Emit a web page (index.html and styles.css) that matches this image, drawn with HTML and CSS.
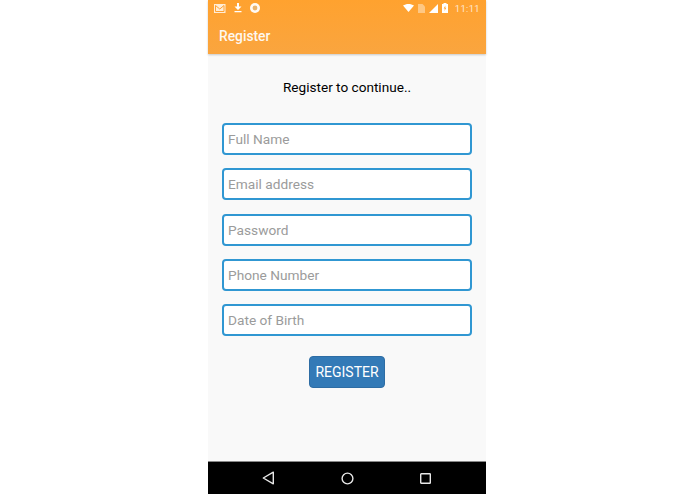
FILE: index.html
```html
<!DOCTYPE html>
<html lang="en">
<head>
<meta charset="utf-8">
<title>Register</title>
<link rel="stylesheet" href="styles.css">
</head>
<body>
<div class="phone">
  <header class="appbar">
    <div class="status">
      <div class="status-left">
        <svg class="ic" width="12" height="11" viewBox="0 0 12 11"><path fill="#fff" fill-opacity=".8" d="M0 1h11.500v9H0z"/><path fill="none" stroke="#ffa233" stroke-width="1" d="M1.500 2.500v6h8.500v-6l-4.200 3.500z"/></svg>
        <svg class="ic" width="8" height="10" viewBox="0 0 8 10"><path fill="#fff" d="M3 0h2v3.500h2.500L4 7 .5 3.500H3zM.5 8h7v1.200h-7z"/></svg>
        <svg class="ic" width="10" height="10" viewBox="0 0 10 10"><circle cx="5" cy="5" r="5" fill="#fff" fill-opacity=".95"/><circle cx="5" cy="5" r="2.400" fill="#e9b36c"/></svg>
      </div>
      <div class="status-right">
        <svg width="11" height="8" viewBox="0 0 11 8"><path fill="#fff" d="M0 1.600C3-.5 8-.5 11 1.600L5.500 8z"/></svg>
        <svg width="7" height="9" viewBox="0 0 7 9"><path fill="#fff" fill-opacity=".4" d="M0 0h4.500L7 2.500V9H0z"/></svg>
        <svg width="9" height="9" viewBox="0 0 9 9"><path fill="#fff" d="M9 0v9H0z"/></svg>
        <svg width="6" height="10" viewBox="0 0 6 10"><path fill="#fff" d="M1.500 0h3v1H6v9H0V1h1.500z"/><path fill="#ffa233" d="M3.400 2.500 1.700 5.600h1.100L2.500 8l1.800-3.200H3.200z"/></svg>
        <span class="time">11:11</span>
      </div>
    </div>
    <div class="bar-title">Register</div>
  </header>
  <main class="content">
    <h1 class="heading">Register to continue..</h1>
    <form class="form">
      <input class="field" type="text" placeholder="Full Name">
      <input class="field" type="text" placeholder="Email address">
      <input class="field" type="text" placeholder="Password">
      <input class="field" type="text" placeholder="Phone Number">
      <input class="field" type="text" placeholder="Date of Birth">
      <button class="submit" type="button">REGISTER</button>
    </form>
  </main>
  <nav class="navbar">
    <svg width="13" height="14" viewBox="0 0 13 14"><path fill="none" stroke="#e8e8e8" stroke-width="1.400" stroke-linejoin="round" d="M11.300 1.200v11.600L1.300 7z"/></svg>
    <svg width="13" height="13" viewBox="0 0 13 13"><circle cx="6.500" cy="6.500" r="5.400" fill="none" stroke="#e8e8e8" stroke-width="1.400"/></svg>
    <svg width="11" height="11" viewBox="0 0 11 11"><rect x=".7" y=".7" width="9.600" height="9.600" rx=".6" fill="none" stroke="#e8e8e8" stroke-width="1.400"/></svg>
  </nav>
</div>
</body>
</html>
```
FILE: styles.css
```css
* { box-sizing: border-box; }
html, body { margin: 0; height: 100%; background: #fff; }
body { padding-left: 208px; font-family: Roboto, "Liberation Sans", sans-serif; }
.phone { width: 278px; height: 494px; display: flex; flex-direction: column; background: #f9f9f9; }
.appbar { height: 54px; flex: none; background: linear-gradient(#ffa22f, #faa53f); box-shadow: 0 1px 2px rgba(0,0,0,.2); position: relative; }
.status { height: 16px; display: flex; justify-content: space-between; align-items: center; padding: 0 6px; }
.status-left, .status-right { display: flex; align-items: center; }
.status-left { gap: 8px; }
.status-right { gap: 4px; }
.ic { display: block; }
.time { font-size: 9.500px; color: #fff; opacity: .75; letter-spacing: .3px; margin-left: 3px; }
.bar-title { color: #fff; font-size: 13.800px; font-weight: 500; opacity: .92; padding: 12px 0 0 11px; }
.content { flex: 1; display: flex; flex-direction: column; align-items: center; }
.heading { margin: 24px 0 0; font-size: 13.600px; line-height: 18px; font-weight: 400; color: #000; }
.form { width: 100%; padding: 27px 0 0; display: flex; flex-direction: column; align-items: center; gap: 13.300px; }
.field { width: 250px; height: 32px; display: block; padding: 0 4px; border: 2px solid #3097d2; border-radius: 4px; background: #fff; font-family: inherit; font-size: 13.700px; outline: none; }
.field::placeholder { color: #9b9b9b; opacity: 1; }
.submit { margin-top: 7px; width: 76px; height: 32px; padding: 0; background: #337ab7; border: 1px solid #2e6da4; border-radius: 4px; color: #fff; font-family: inherit; font-size: 14px; font-weight: 400; }
.navbar { height: 33px; flex: none; background: #000; border-top: 1px solid #888; padding-right: 2px; display: flex; align-items: center; justify-content: center; gap: 66px; }
```
